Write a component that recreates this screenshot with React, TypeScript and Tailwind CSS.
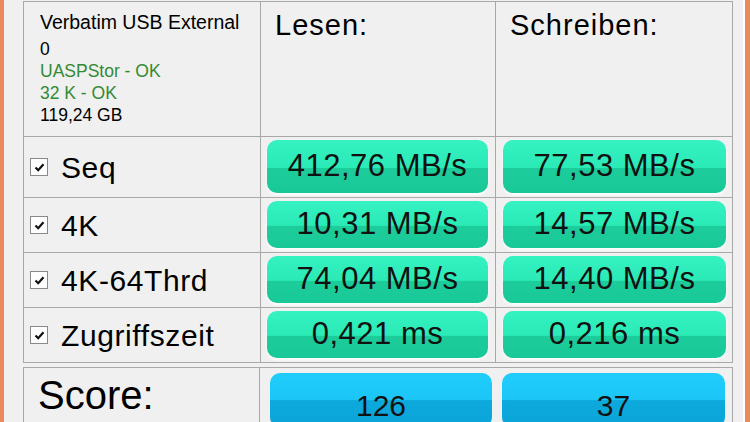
import React from "react"

const rows = [
  { name: "Seq", read: "412,76 MB/s", write: "77,53 MB/s", h: "h-[61px]" },
  { name: "4K", read: "10,31 MB/s", write: "14,57 MB/s", h: "h-[55px]" },
  { name: "4K-64Thrd", read: "74,04 MB/s", write: "14,40 MB/s", h: "h-[55px]" },
  { name: "Zugriffszeit", read: "0,421 ms", write: "0,216 ms", h: "h-[55px]" },
]

function CheckBox() {
  return (
    <div className="w-[18px] h-[18px] border border-[#8a8a8a] bg-white flex items-center justify-center shrink-0">
      <svg width="11" height="11" viewBox="0 0 11 11">
        <path d="M1.5 5.5 L4.2 8.2 L9.5 2.2" fill="none" stroke="#111" strokeWidth="2.2" />
      </svg>
    </div>
  )
}

function GreenBox({ value }: { value: string }) {
  return (
    <div className="h-full w-full rounded-[10px] flex items-center justify-center text-[31px] tracking-[0.5px] text-[#111] bg-[linear-gradient(to_bottom,#36f2c2_0%,#2aeab6_52%,#1ccd9b_53%,#19c897_100%)] shadow-[0_2px_3px_rgba(255,255,255,0.95)]">
      {value}
    </div>
  )
}

function BlueBox({ value }: { value: string }) {
  return (
    <div className="h-[54px] w-full rounded-[10px] flex items-center justify-center pt-[10px] text-[30px] text-[#111] bg-[linear-gradient(to_bottom,#20cdfc_0%,#1bc6f7_50%,#0da9dd_51%,#0aa4d8_100%)]">
      {value}
    </div>
  )
}

export default function App() {
  return (
    <div
      className="w-[750px] h-[422px] overflow-hidden flex bg-[#f0f0f0] text-black"
      style={{ fontFamily: '"Liberation Sans", Arial, sans-serif' }}
    >
      <div className="w-[4px] bg-[#e9895c] shrink-0" />
      <div className="w-[739px] shrink-0 pl-[19px] pt-[1px]">
        {/* results table */}
        <div className="w-[710px] border-l border-t border-[#a8a8a8]">
          <div className="grid grid-cols-[237px_235px_237px] h-[135px]">
            <div className="border-r border-b border-[#a8a8a8] pl-[16px] pt-[8px] leading-[22px] text-[17.5px]">
              <div className="text-[19.5px] leading-[24px] mb-[4px]">Verbatim USB External</div>
              <div>0</div>
              <div className="text-[#338a33]">UASPStor - OK</div>
              <div className="text-[#338a33]">32 K - OK</div>
              <div>119,24 GB</div>
            </div>
            <div className="border-r border-b border-[#a8a8a8] pl-[14px] pt-[2px] text-[29px] tracking-[1px]">Lesen:</div>
            <div className="border-r border-b border-[#a8a8a8] pl-[14px] pt-[2px] text-[29px] tracking-[1px]">Schreiben:</div>
          </div>
          {rows.map((r) => (
            <div key={r.name} className={`grid grid-cols-[237px_235px_237px] ${r.h}`}>
              <div className="border-r border-b border-[#a8a8a8] flex items-center pl-[6px] gap-[13px]">
                <CheckBox />
                <span className="text-[30px] tracking-[0.6px]">{r.name}</span>
              </div>
              <div className="border-r border-b border-[#a8a8a8] pl-[6px] pr-[7px] pt-[3px] pb-[4px]">
                <GreenBox value={r.read} />
              </div>
              <div className="border-r border-b border-[#a8a8a8] pl-[7px] pr-[6px] pt-[3px] pb-[4px]">
                <GreenBox value={r.write} />
              </div>
            </div>
          ))}
        </div>

        {/* score */}
        <div className="mt-[4px] w-[710px] h-[80px] border-l border-t border-r border-[#a8a8a8] grid grid-cols-[236px_235px_237px]">
          <div className="border-r border-[#a8a8a8] pl-[14px] pt-[7px] text-[40px] leading-none">Score:</div>
          <div className="pl-[10px] pr-[3px] pt-[5px]">
            <BlueBox value="126" />
          </div>
          <div className="pl-[7px] pr-[7px] pt-[5px]">
            <BlueBox value="37" />
          </div>
        </div>
      </div>
      <div className="w-[2px] bg-white shrink-0" />
      <div className="flex-1 bg-[#e9895c]" />
    </div>
  )
}
